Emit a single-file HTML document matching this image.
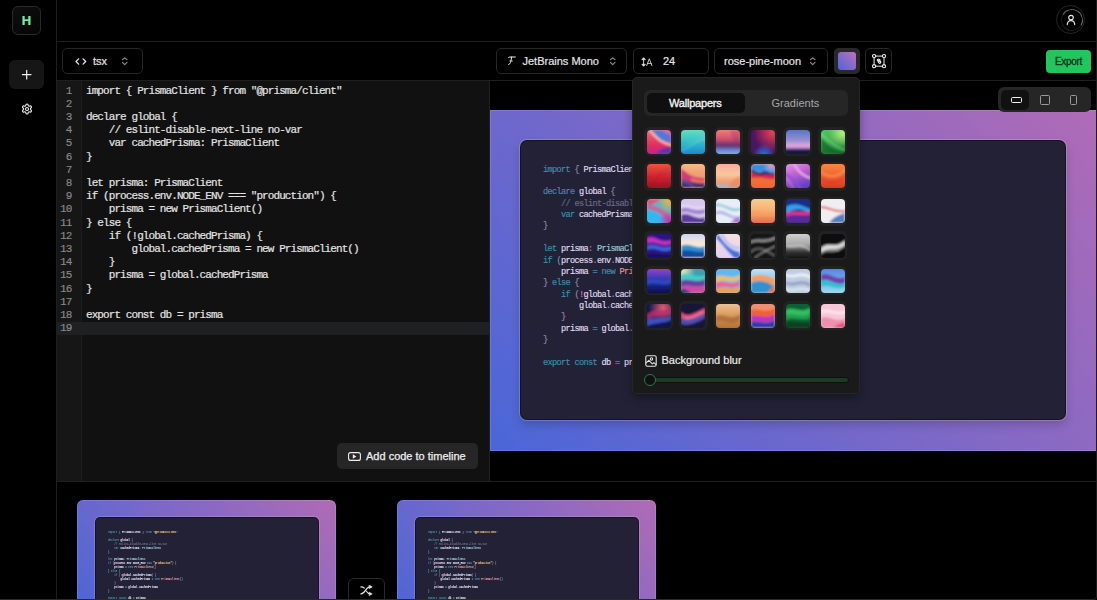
<!DOCTYPE html>
<html><head><meta charset="utf-8">
<style>
*{box-sizing:border-box;margin:0;padding:0}
html,body{width:1097px;height:600px;overflow:hidden;background:#000;font-family:"Liberation Sans",sans-serif;color:#e8e8e8}
.abs{position:absolute}
#side{position:absolute;left:0;top:0;width:57px;height:600px;border-right:1px solid #1f1f1f;background:#000}
#logo{left:12px;top:6px;width:29px;height:29px;border-radius:6px;border:1px solid #2a2a2a;background:linear-gradient(135deg,#0f0f0f,#050505);color:#7beaa5;font-weight:700;font-size:13px;-webkit-text-stroke:0.2px #7beaa5;text-align:center;line-height:27px}
#plus{left:9px;top:60px;width:35px;height:29px;border-radius:6px;background:#171616}
#hdr{position:absolute;left:57px;top:0;width:1040px;height:42px;border-bottom:1px solid #1f1f1f}
#tool{position:absolute;left:57px;top:42px;width:1040px;height:39px;border-bottom:1px solid #1f1f1f}
.sel{position:absolute;top:48px;height:26px;border:1px solid #262626;border-radius:5px;font-size:11px;color:#e6e6e6;line-height:24px;-webkit-text-stroke:0.2px #e6e6e6}
#editor{position:absolute;left:57px;top:81px;width:432px;height:400px;background:#111}
#gutter{position:absolute;left:0;top:0;width:25px;height:400px;background:#161616;border-right:1px solid #1c1c1c}
.code{position:absolute;font-family:"Liberation Mono",monospace;white-space:pre}
#ecode{left:29px;top:3.5px;font-size:11px;letter-spacing:-0.92px;-webkit-text-stroke:0.2px #e4e4e4;line-height:13.2px;color:#e4e4e4}
#lnum{left:0;top:3.5px;width:14.3px;-webkit-text-stroke:0.15px #8a8a8a;text-align:right;font-size:11px;letter-spacing:-0.97px;line-height:13.2px;color:#8a8a8a;font-family:"Liberation Mono",monospace;white-space:pre}
#active{left:0;top:241px;width:432px;height:13px;background:#1f2022}
#preview{position:absolute;left:489px;top:81px;width:608px;height:400px;border-left:1px solid #1f1f1f;background:#000}
#frame{left:0;top:29px;width:607px;height:341px;background:linear-gradient(47.5deg,#4a66d8,#b06bb6);box-shadow:inset 0 0 0 1px rgba(255,255,255,.12)}
#win{left:30px;top:30px;width:546px;height:280px;border-radius:7px;background:#232136;border:1px solid rgba(0,0,0,.45);box-shadow:0 0 0 1px rgba(255,255,255,.2),0 5px 10px rgba(0,0,0,.18)}
#pcode{left:22px;top:23.5px;font-size:8.6px;letter-spacing:-0.66px;line-height:11.37px;color:#e0def4;-webkit-text-stroke:0.15px currentColor}
.k{color:#3e8fb0}.p{color:#908caa}.t{color:#9ccfd8}.c{color:#6e6a86}.r{color:#ea9a97}.g{color:#f6c177}.l{color:#eb6f92}
#pop{left:632px;top:77px;width:227.5px;height:316.5px;background:#1a1a1a;border:1px solid #262626;border-radius:5px;box-shadow:0 4px 10px rgba(0,0,0,.35)}
#timeline{position:absolute;left:57px;top:481px;width:1040px;height:119px;border-top:1px solid #1f1f1f;background:#000}
.th{position:absolute;width:29px;height:29px;border-radius:6px;background:#222}
.th i{position:absolute;left:2.5px;top:2.5px;width:24px;height:24px;border-radius:4px}
</style></head><body>
<div id="side">
  <div id="logo" class="abs">H</div>
  <div id="plus" class="abs"><svg width="35" height="29" viewBox="0 0 35 29"><path d="M17.7 10.3v8.6M13.4 14.6h8.6" stroke="#f2f2f2" stroke-width="1.2" stroke-linecap="round"/></svg></div>
  <svg class="abs" style="left:21px;top:103px" width="12" height="12" viewBox="0 0 24 24" fill="none" stroke="#eee" stroke-width="2.2" stroke-linecap="round" stroke-linejoin="round"><path d="M12.22 2h-.44a2 2 0 0 0-2 2v.18a2 2 0 0 1-1 1.73l-.43.25a2 2 0 0 1-2 0l-.15-.08a2 2 0 0 0-2.73.73l-.22.38a2 2 0 0 0 .73 2.73l.15.1a2 2 0 0 1 1 1.72v.51a2 2 0 0 1-1 1.74l-.15.09a2 2 0 0 0-.73 2.73l.22.38a2 2 0 0 0 2.73.73l.15-.08a2 2 0 0 1 2 0l.43.25a2 2 0 0 1 1 1.73V20a2 2 0 0 0 2 2h.44a2 2 0 0 0 2-2v-.18a2 2 0 0 1 1-1.73l.43-.25a2 2 0 0 1 2 0l.15.08a2 2 0 0 0 2.73-.73l.22-.39a2 2 0 0 0-.73-2.73l-.15-.08a2 2 0 0 1-1-1.74v-.5a2 2 0 0 1 1-1.74l.15-.09a2 2 0 0 0 .73-2.73l-.22-.38a2 2 0 0 0-2.73-.73l-.15.08a2 2 0 0 1-2 0l-.43-.25a2 2 0 0 1-1-1.73V4a2 2 0 0 0-2-2z"/><circle cx="12" cy="12" r="3"/></svg>
</div>
<div id="hdr"></div>
<div class="abs" style="left:1056px;top:5px;width:29px;height:29px;border-radius:50%;border:1px solid #262626"></div>
<div class="abs" style="left:1060.5px;top:8.5px;width:22px;height:22px;border-radius:50%;border:1.2px solid #1c1c1c;border-right-color:#707070;border-top-color:#606060;transform:rotate(-15deg)"></div>
<svg class="abs" style="left:1064px;top:13px" width="14" height="14" viewBox="0 0 14 14" fill="none" stroke="#e6e6e6" stroke-width="1.2"><circle cx="7" cy="4.6" r="2.3"/><path d="M3.3 11.6c0-2.2 1.6-4 3.7-4s3.7 1.8 3.7 4" stroke-linecap="round"/></svg>
<div id="tool"></div>
<div class="sel" style="left:62px;width:81px"><svg class="abs" style="left:12px;top:9px" width="12" height="7" viewBox="0 0 12 7" fill="none" stroke="#eee" stroke-width="1.2" stroke-linecap="round" stroke-linejoin="round"><path d="M3.6 0.8L1 3.5 3.6 6.2M8.1 0.8L10.7 3.5 8.1 6.2"/></svg><span class="abs" style="left:30px;top:0">tsx</span><svg class="abs" style="left:59px;top:8px" width="6" height="9" viewBox="0 0 6 9" fill="none" stroke="#8f8f8f" stroke-width="1.1" stroke-linecap="round" stroke-linejoin="round"><path d="M0.4 2.6L2.7 1.0 5 2.6M0.4 5.4L2.7 7.6 5 5.4"/></svg></div>
<div class="sel" style="left:496px;width:131px"><svg class="abs" style="left:9px;top:7px" width="11" height="11" viewBox="0 0 11 11" fill="none" stroke="#eee" stroke-width="1" stroke-linecap="round"><path d="M2.3 1.7c.5-.6 1-.7 1.6-.7H9.3"/><path d="M5.6 1.2c-.3 2-.5 3.6-1.2 5.4-.4 1.1-.9 1.7-1.7 1.9"/><path d="M3.8 5h2.6" stroke-width="0.8"/></svg><span class="abs" style="left:25.5px;top:0">JetBrains Mono</span><svg class="abs" style="left:113px;top:8px" width="6" height="9" viewBox="0 0 6 9" fill="none" stroke="#8f8f8f" stroke-width="1.1" stroke-linecap="round" stroke-linejoin="round"><path d="M0.4 2.6L2.7 1.0 5 2.6M0.4 5.4L2.7 7.6 5 5.4"/></svg></div>
<div class="sel" style="left:633px;width:76px"><svg class="abs" style="left:7px;top:8px" width="13" height="10" viewBox="0 0 13 10" fill="none" stroke="#e0e0e0" stroke-width="0.9" stroke-linecap="round" stroke-linejoin="round"><path d="M2.6 1.5v7"/><path d="M1.1 2.4L2.6 0.7 4.1 2.4zM1.1 7.6L2.6 9.3 4.1 7.6z" fill="#e0e0e0"/><path d="M5.7 8.6L8.3 1.8 10.9 8.6M6.5 6.4h3.6"/></svg><span class="abs" style="left:29px;top:0">24</span></div>
<div class="sel" style="left:714px;width:114px"><span class="abs" style="left:9px;top:0">rose-pine-moon</span><svg class="abs" style="left:95px;top:8px" width="6" height="9" viewBox="0 0 6 9" fill="none" stroke="#8f8f8f" stroke-width="1.1" stroke-linecap="round" stroke-linejoin="round"><path d="M0.4 2.6L2.7 1.0 5 2.6M0.4 5.4L2.7 7.6 5 5.4"/></svg></div>
<div class="abs" style="left:834px;top:48px;width:26px;height:26px;border-radius:5px;background:#2a2828"><div class="abs" style="left:4px;top:4px;width:18px;height:18px;border-radius:3px;background:linear-gradient(to top right,#4d63dc,#8a6cc8 55%,#c071bd)"></div></div>
<div class="sel" style="left:865px;width:27px"><svg class="abs" style="left:0;top:0" width="27" height="26" viewBox="0 0 27 26" fill="none" stroke="#eee" stroke-width="1"><path d="M9.6 7.1H16.5M18 8.6V15.7M16.5 17.2H9.6M8.1 15.7V8.6"/><circle cx="8.1" cy="7.1" r="1.6" fill="#000" stroke-width="1.1"/><circle cx="18" cy="7.1" r="1.6" fill="#000" stroke-width="1.1"/><circle cx="8.1" cy="17.2" r="1.6" fill="#000" stroke-width="1.1"/><circle cx="18" cy="17.2" r="1.6" fill="#000" stroke-width="1.1"/><path d="M12.4 12.6l-.7-.7a1.1 1.1 0 0 1 1.6-1.6l.7.7M13.8 11.6l.7.7a1.1 1.1 0 0 1-1.6 1.6l-.7-.7M12.6 11.4l1.3 1.3" stroke-width="1.1" stroke-linecap="round"/></svg></div>
<div class="abs" style="left:1046px;top:50px;width:45px;height:23px;border-radius:4px;background:#22c55e;color:#0b2914;font-size:10px;text-align:center;line-height:23px;letter-spacing:-0.3px;-webkit-text-stroke:0.3px #0b2914">Export</div>
<div id="editor">
  <div id="gutter"></div>
  <div id="active" class="abs"></div>
  <div id="lnum" class="abs">1
2
3
4
5
6
7
8
9
10
11
12
13
14
15
16
17
18
19</div>
  <div id="ecode" class="code">import { PrismaClient } from "@prisma/client"

declare global {
    // eslint-disable-next-line no-var
    var cachedPrisma: PrismaClient
}

let prisma: PrismaClient
if (process.env.NODE_ENV === "production") {
    prisma = new PrismaClient()
} else {
    if (!global.cachedPrisma) {
        global.cachedPrisma = new PrismaClient()
    }
    prisma = global.cachedPrisma
}

export const db = prisma
</div>
  <div class="abs" style="left:280px;top:362px;width:141px;height:26px;border-radius:5px;background:#262626;color:#f0f0f0;font-size:11px;line-height:26px"><svg class="abs" style="left:10.5px;top:8.5px" width="13" height="9" viewBox="0 0 13 9" fill="none" stroke="#eee" stroke-width="1.1"><rect x="0.6" y="0.6" width="11.8" height="7.8" rx="2"/><path d="M4.8 2.3v4.4l3.6-2.2z" fill="#eee" stroke="none"/></svg><span class="abs" style="left:29px;top:0;-webkit-text-stroke:0.25px #f0f0f0">Add code to timeline</span></div>
</div>
<div id="preview">
  <div id="frame" class="abs">
    <div id="win" class="abs">
      <div id="pcode" class="code"><span class="k">import</span> <span class="p">{</span> PrismaClient <span class="p">}</span> <span class="k">from</span> <span class="g">"@prisma/client"</span>

<span class="k">declare</span> global <span class="p">{</span>
    <span class="c">// eslint-disable-next-line no-var</span>
    <span class="k">var</span> cachedPrisma<span class="p">:</span> <span class="t">PrismaClient</span>
<span class="p">}</span>

<span class="k">let</span> prisma<span class="p">:</span> <span class="t">PrismaClient</span>
<span class="k">if</span> <span class="p">(</span>process<span class="p">.</span>env<span class="p">.</span>NODE_ENV <span class="k">===</span> <span class="g">"production"</span><span class="p">)</span> <span class="p">{</span>
    prisma <span class="k">=</span> <span class="k">new</span> <span class="r">PrismaClient</span><span class="p">()</span>
<span class="p">}</span> <span class="k">else</span> <span class="p">{</span>
    <span class="k">if</span> <span class="p">(</span><span class="l">!</span>global<span class="p">.</span>cachedPrisma<span class="p">)</span> <span class="p">{</span>
        global<span class="p">.</span>cachedPrisma <span class="k">=</span> <span class="k">new</span> <span class="r">PrismaClient</span><span class="p">()</span>
    <span class="p">}</span>
    prisma <span class="k">=</span> global<span class="p">.</span>cachedPrisma
<span class="p">}</span>

<span class="k">export</span> <span class="k">const</span> db <span class="k">=</span> prisma</div>
    </div>
  </div>
</div>
<div class="abs" style="left:998px;top:87px;width:93px;height:25px;border-radius:6px;background:#262626">
  <div class="abs" style="left:3px;top:3px;width:28px;height:19.5px;border-radius:5px;background:#111"></div>
  <div class="abs" style="left:12.5px;top:9.5px;width:11px;height:6.5px;border:1.3px solid #f2f2f2;border-radius:1.5px"></div>
  <div class="abs" style="left:42px;top:7.8px;width:10px;height:10px;border:1.3px solid #9a9a9a;border-radius:1.5px"></div>
  <div class="abs" style="left:72px;top:7.5px;width:7px;height:10.5px;border:1.3px solid #9a9a9a;border-radius:1.5px"></div>
</div>
<div id="timeline"><div class="abs" style="left:20px;top:18px;width:259px;height:110px;border-radius:6px;background:linear-gradient(47.5deg,#4a66d8,#b06bb6);box-shadow:inset 0 0 0 1px rgba(255,255,255,.12)"><div class="abs" style="left:17.5px;top:17px;width:224px;height:100px;border-radius:5px;background:#232136;overflow:hidden;border:1px solid rgba(0,0,0,.4);box-shadow:0 0 0 1px rgba(255,255,255,.15)"><div class="code abs" style="left:12.3px;top:13.3px;font-size:7.8px;line-height:11.64px;color:#e0def4;transform:scale(0.3333);transform-origin:0 0;-webkit-text-stroke:0.35px currentColor"><span class="k">import</span> <span class="p">{</span> PrismaClient <span class="p">}</span> <span class="k">from</span> <span class="g">"@prisma/client"</span>

<span class="k">declare</span> global <span class="p">{</span>
    <span class="c">// eslint-disable-next-line no-var</span>
    <span class="k">var</span> cachedPrisma<span class="p">:</span> <span class="t">PrismaClient</span>
<span class="p">}</span>

<span class="k">let</span> prisma<span class="p">:</span> <span class="t">PrismaClient</span>
<span class="k">if</span> <span class="p">(</span>process<span class="p">.</span>env<span class="p">.</span>NODE_ENV <span class="k">===</span> <span class="g">"production"</span><span class="p">)</span> <span class="p">{</span>
    prisma <span class="k">=</span> <span class="k">new</span> <span class="r">PrismaClient</span><span class="p">()</span>
<span class="p">}</span> <span class="k">else</span> <span class="p">{</span>
    <span class="k">if</span> <span class="p">(</span><span class="l">!</span>global<span class="p">.</span>cachedPrisma<span class="p">)</span> <span class="p">{</span>
        global<span class="p">.</span>cachedPrisma <span class="k">=</span> <span class="k">new</span> <span class="r">PrismaClient</span><span class="p">()</span>
    <span class="p">}</span>
    prisma <span class="k">=</span> global<span class="p">.</span>cachedPrisma
<span class="p">}</span>

<span class="k">export</span> <span class="k">const</span> db <span class="k">=</span> prisma</div></div></div><div class="abs" style="left:340px;top:18px;width:259px;height:110px;border-radius:6px;background:linear-gradient(47.5deg,#4a66d8,#b06bb6);box-shadow:inset 0 0 0 1px rgba(255,255,255,.12)"><div class="abs" style="left:17.5px;top:17px;width:224px;height:100px;border-radius:5px;background:#232136;overflow:hidden;border:1px solid rgba(0,0,0,.4);box-shadow:0 0 0 1px rgba(255,255,255,.15)"><div class="code abs" style="left:12.3px;top:13.3px;font-size:7.8px;line-height:11.64px;color:#e0def4;transform:scale(0.3333);transform-origin:0 0;-webkit-text-stroke:0.35px currentColor"><span class="k">import</span> <span class="p">{</span> PrismaClient <span class="p">}</span> <span class="k">from</span> <span class="g">"@prisma/client"</span>

<span class="k">declare</span> global <span class="p">{</span>
    <span class="c">// eslint-disable-next-line no-var</span>
    <span class="k">var</span> cachedPrisma<span class="p">:</span> <span class="t">PrismaClient</span>
<span class="p">}</span>

<span class="k">let</span> prisma<span class="p">:</span> <span class="t">PrismaClient</span>
<span class="k">if</span> <span class="p">(</span>process<span class="p">.</span>env<span class="p">.</span>NODE_ENV <span class="k">===</span> <span class="g">"production"</span><span class="p">)</span> <span class="p">{</span>
    prisma <span class="k">=</span> <span class="k">new</span> <span class="r">PrismaClient</span><span class="p">()</span>
<span class="p">}</span> <span class="k">else</span> <span class="p">{</span>
    <span class="k">if</span> <span class="p">(</span><span class="l">!</span>global<span class="p">.</span>cachedPrisma<span class="p">)</span> <span class="p">{</span>
        global<span class="p">.</span>cachedPrisma <span class="k">=</span> <span class="k">new</span> <span class="r">PrismaClient</span><span class="p">()</span>
    <span class="p">}</span>
    prisma <span class="k">=</span> global<span class="p">.</span>cachedPrisma
<span class="p">}</span>

<span class="k">export</span> <span class="k">const</span> db <span class="k">=</span> prisma</div></div></div><div class="abs" style="left:291px;top:96px;width:36.5px;height:30px;border-radius:6px;background:#000;border:1px solid #2a2a2a"><svg class="abs" style="left:11px;top:5.5px" width="13" height="11" viewBox="0 0 13 11" fill="none" stroke="#e8e8e8" stroke-width="1.1" stroke-linecap="round"><path d="M0.9 1.9c1.6 0 2.6.5 3.4 1.3"/><path d="M6.4 6.2c.9 1.4 2 2.6 3.6 2.6"/><path d="M0.9 8.9c4.5 0 4.6-7 9.1-7"/><path d="M9.4 0.3L12.2 1.9 9.4 3.5z M9.4 7.3L12.2 8.9 9.4 10.5z" fill="#e8e8e8" stroke-width="0.6" stroke-linejoin="round"/></svg></div></div>
<div class="abs" style="left:0;top:0;width:1097px;height:600px;border-right:1px solid #1c1c1c;border-bottom:1px solid #2a2a2a;border-bottom-right-radius:4px;pointer-events:none"></div>
<div id="pop" class="abs">
  <div class="abs" style="left:11px;top:11.5px;width:204px;height:26px;border-radius:6px;background:#262626">
    <div class="abs" style="left:3px;top:3px;width:98px;height:20px;border-radius:5px;background:#0f0f0f"></div>
    <span class="abs" style="left:25px;top:0;line-height:26px;font-size:11px;color:#f4f4f4;letter-spacing:-0.2px;-webkit-text-stroke:0.35px #f4f4f4">Wallpapers</span>
    <span class="abs" style="left:127.5px;top:0;line-height:26px;font-size:11px;color:#a8a8a8">Gradients</span>
  </div>
  <div class="th" style="left:11.0px;top:49.0px"><svg class="abs" style="left:2.5px;top:2.5px" width="24" height="24" viewBox="0 0 24 24"><defs><linearGradient id="t0a" x1="0" y1="0" x2="0" y2="1"><stop offset="0" stop-color="#f07080"/><stop offset="0.6" stop-color="#e03060"/><stop offset="1" stop-color="#c02090"/></linearGradient><clipPath id="c0"><rect width="24" height="24" rx="4"/></clipPath><filter id="f0" x="-10%" y="-10%" width="120%" height="120%"><feGaussianBlur stdDeviation="0.8"/></filter></defs><g clip-path="url(#c0)"><g filter="url(#f0)"><rect x="-2" y="-2" width="28" height="28" fill="url(#t0a)"/><path d="M5 0 C9 5 12 11 24 13 V0 Z" fill="#4f78dc" opacity="1"/><path d="M15 0 H24 V5 C20 4 17 2 15 0Z" fill="#e060b0" opacity="1"/><path d="M3 1 C8 5 11 12 24 15" fill="none" stroke="#f8c0a8" stroke-width="2.2" opacity="1" stroke-linecap="round"/><path d="M9 24 C13 19 18 17 24 17 V24 Z" fill="#6030b0" opacity="1"/></g></g></svg></div><div class="th" style="left:45.8px;top:49.0px"><svg class="abs" style="left:2.5px;top:2.5px" width="24" height="24" viewBox="0 0 24 24"><defs><linearGradient id="t1a" x1="0" y1="0" x2="0" y2="1"><stop offset="0" stop-color="#70e0c0"/><stop offset="0.5" stop-color="#30c0c8"/><stop offset="1" stop-color="#1880d0"/></linearGradient><clipPath id="c1"><rect width="24" height="24" rx="4"/></clipPath><filter id="f1" x="-10%" y="-10%" width="120%" height="120%"><feGaussianBlur stdDeviation="0.8"/></filter></defs><g clip-path="url(#c1)"><g filter="url(#f1)"><rect x="-2" y="-2" width="28" height="28" fill="url(#t1a)"/><path d="M0 21 C8 18 14 11 24 9" fill="none" stroke="#fff" stroke-width="0.8" opacity="0.35" stroke-linecap="round"/><path d="M0 17 C8 14 14 8 24 6" fill="none" stroke="#fff" stroke-width="0.6" opacity="0.2" stroke-linecap="round"/></g></g></svg></div><div class="th" style="left:80.6px;top:49.0px"><svg class="abs" style="left:2.5px;top:2.5px" width="24" height="24" viewBox="0 0 24 24"><defs><linearGradient id="t2a" x1="0" y1="0" x2="0" y2="1"><stop offset="0" stop-color="#f08a78"/><stop offset="0.4" stop-color="#d05070"/><stop offset="0.62" stop-color="#603070"/><stop offset="0.85" stop-color="#70a0e8"/><stop offset="1" stop-color="#a0a0f0"/></linearGradient><linearGradient id="t2b" x1="0" y1="0" x2="1" y2="0"><stop offset="0" stop-color="#a02864"/><stop offset="1" stop-color="#a02864"/></linearGradient><clipPath id="c2"><rect width="24" height="24" rx="4"/></clipPath><filter id="f2" x="-10%" y="-10%" width="120%" height="120%"><feGaussianBlur stdDeviation="0.8"/></filter></defs><g clip-path="url(#c2)"><g filter="url(#f2)"><rect x="-2" y="-2" width="28" height="28" fill="url(#t2a)"/><path d="M14 0 H24 V20 C20 16 16 10 14 0Z" fill="#a02864" opacity="0.3"/></g></g></svg></div><div class="th" style="left:115.4px;top:49.0px"><svg class="abs" style="left:2.5px;top:2.5px" width="24" height="24" viewBox="0 0 24 24"><defs><radialGradient id="t3a" cx="22" cy="2" r="20" gradientUnits="userSpaceOnUse"><stop offset="0" stop-color="#f04050"/><stop offset="1" stop-color="#f04050" stop-opacity="0"/></radialGradient><radialGradient id="t3b" cx="13" cy="25" r="11" gradientUnits="userSpaceOnUse"><stop offset="0" stop-color="#2878f0"/><stop offset="1" stop-color="#2878f0" stop-opacity="0"/></radialGradient><clipPath id="c3"><rect width="24" height="24" rx="4"/></clipPath><filter id="f3" x="-10%" y="-10%" width="120%" height="120%"><feGaussianBlur stdDeviation="0.8"/></filter></defs><g clip-path="url(#c3)"><g filter="url(#f3)"><rect x="-2" y="-2" width="28" height="28" fill="#4a1462"/><rect x="-2" y="-2" width="28" height="28" fill="url(#t3a)"/><rect x="-2" y="-2" width="28" height="28" fill="url(#t3b)"/></g></g></svg></div><div class="th" style="left:150.2px;top:49.0px"><svg class="abs" style="left:2.5px;top:2.5px" width="24" height="24" viewBox="0 0 24 24"><defs><linearGradient id="t4a" x1="0" y1="0" x2="0" y2="1"><stop offset="0" stop-color="#4a70c8"/><stop offset="0.45" stop-color="#9a90d0"/><stop offset="0.65" stop-color="#e8a8e0"/><stop offset="0.72" stop-color="#b080c0"/><stop offset="0.78" stop-color="#202050"/><stop offset="1" stop-color="#0a0a30"/></linearGradient><clipPath id="c4"><rect width="24" height="24" rx="4"/></clipPath><filter id="f4" x="-10%" y="-10%" width="120%" height="120%"><feGaussianBlur stdDeviation="0.8"/></filter></defs><g clip-path="url(#c4)"><g filter="url(#f4)"><rect x="-2" y="-2" width="28" height="28" fill="url(#t4a)"/></g></g></svg></div><div class="th" style="left:185.0px;top:49.0px"><svg class="abs" style="left:2.5px;top:2.5px" width="24" height="24" viewBox="0 0 24 24"><defs><linearGradient id="t5a" x1="0" y1="0" x2="1" y2="1"><stop offset="0" stop-color="#50d070"/><stop offset="0.4" stop-color="#40b050"/><stop offset="1" stop-color="#0e6a28"/></linearGradient><radialGradient id="t5b" cx="22" cy="3" r="15" gradientUnits="userSpaceOnUse"><stop offset="0" stop-color="#b8f488"/><stop offset="1" stop-color="#b8f488" stop-opacity="0"/></radialGradient><clipPath id="c5"><rect width="24" height="24" rx="4"/></clipPath><filter id="f5" x="-10%" y="-10%" width="120%" height="120%"><feGaussianBlur stdDeviation="0.8"/></filter></defs><g clip-path="url(#c5)"><g filter="url(#f5)"><rect x="-2" y="-2" width="28" height="28" fill="url(#t5a)"/><rect x="-2" y="-2" width="28" height="28" fill="url(#t5b)"/><path d="M0 8 C6 14 14 22 24 22 V24 H0Z" fill="#0a5020" opacity="0.6"/><path d="M0 4 C8 10 14 18 24 20" fill="none" stroke="#80e890" stroke-width="1.2" opacity="0.8" stroke-linecap="round"/></g></g></svg></div><div class="th" style="left:11.0px;top:83.8px"><svg class="abs" style="left:2.5px;top:2.5px" width="24" height="24" viewBox="0 0 24 24"><defs><linearGradient id="t6a" x1="0" y1="0" x2="0" y2="1"><stop offset="0" stop-color="#f05a40"/><stop offset="0.55" stop-color="#d02030"/><stop offset="1" stop-color="#901020"/></linearGradient><clipPath id="c6"><rect width="24" height="24" rx="4"/></clipPath><filter id="f6" x="-10%" y="-10%" width="120%" height="120%"><feGaussianBlur stdDeviation="0.8"/></filter></defs><g clip-path="url(#c6)"><g filter="url(#f6)"><rect x="-2" y="-2" width="28" height="28" fill="url(#t6a)"/><path d="M4 24 C8 14 14 8 22 4" fill="none" stroke="#000" stroke-width="1" opacity="0.12" stroke-linecap="round"/><path d="M0 14 C8 10 16 12 24 8" fill="none" stroke="#000" stroke-width="1" opacity="0.1" stroke-linecap="round"/></g></g></svg></div><div class="th" style="left:45.8px;top:83.8px"><svg class="abs" style="left:2.5px;top:2.5px" width="24" height="24" viewBox="0 0 24 24"><defs><linearGradient id="t7a" x1="0" y1="0" x2="0" y2="1"><stop offset="0" stop-color="#f8c090"/><stop offset="0.4" stop-color="#f0a070"/><stop offset="1" stop-color="#f0a070"/></linearGradient><clipPath id="c7"><rect width="24" height="24" rx="4"/></clipPath><filter id="f7" x="-10%" y="-10%" width="120%" height="120%"><feGaussianBlur stdDeviation="0.8"/></filter></defs><g clip-path="url(#c7)"><g filter="url(#f7)"><rect x="-2" y="-2" width="28" height="28" fill="url(#t7a)"/><path d="M0 4 C6 10 12 14 24 14 V19 C14 20 8 17 0 15 Z" fill="#d03a7a" opacity="1"/><path d="M10 14 C16 15 20 17 24 16 V20 C20 20 14 19 10 18Z" fill="#f07050" opacity="1"/><path d="M0 15 C8 17 14 20 24 19 V24 H0Z" fill="#40307a" opacity="1"/><path d="M0 17 C6 18 10 20 14 24" fill="none" stroke="#90a0f0" stroke-width="1" opacity="0.6" stroke-linecap="round"/></g></g></svg></div><div class="th" style="left:80.6px;top:83.8px"><svg class="abs" style="left:2.5px;top:2.5px" width="24" height="24" viewBox="0 0 24 24"><defs><linearGradient id="t8a" x1="0" y1="0" x2="0" y2="1"><stop offset="0" stop-color="#f8a898"/><stop offset="0.45" stop-color="#f8c8a0"/><stop offset="0.7" stop-color="#f0a070"/><stop offset="1" stop-color="#90b8e8"/></linearGradient><clipPath id="c8"><rect width="24" height="24" rx="4"/></clipPath><filter id="f8" x="-10%" y="-10%" width="120%" height="120%"><feGaussianBlur stdDeviation="0.8"/></filter></defs><g clip-path="url(#c8)"><g filter="url(#f8)"><rect x="-2" y="-2" width="28" height="28" fill="url(#t8a)"/><path d="M12 24 C14 18 18 14 24 12 V24Z" fill="#f08050" opacity="0.55"/></g></g></svg></div><div class="th" style="left:115.4px;top:83.8px"><svg class="abs" style="left:2.5px;top:2.5px" width="24" height="24" viewBox="0 0 24 24"><defs><linearGradient id="t9a" x1="0" y1="0" x2="0" y2="1"><stop offset="0" stop-color="#f09040"/><stop offset="1" stop-color="#f06030"/></linearGradient><radialGradient id="t9b" cx="20" cy="2" r="8" gradientUnits="userSpaceOnUse"><stop offset="0" stop-color="#e0a0c0"/><stop offset="1" stop-color="#e0a0c0" stop-opacity="0"/></radialGradient><clipPath id="c9"><rect width="24" height="24" rx="4"/></clipPath><filter id="f9" x="-10%" y="-10%" width="120%" height="120%"><feGaussianBlur stdDeviation="0.8"/></filter></defs><g clip-path="url(#c9)"><g filter="url(#f9)"><rect x="-2" y="-2" width="28" height="28" fill="url(#t9a)"/><path d="M0 0 H24 V9 C18 11 12 7 6 8 C4 8 2 6 0 5Z" fill="#3090e0" opacity="1"/><rect x="-2" y="-2" width="28" height="28" fill="url(#t9b)"/><path d="M0 5 C4 8 8 10 12 8 C16 6 20 11 24 9 V11 C20 13 16 9 12 11 C8 13 4 10 0 8Z" fill="#202070" opacity="1"/><path d="M0 8 C4 11 8 13 12 11 C16 9 20 13 24 11 V15 C18 16 10 12 0 14Z" fill="#e02050" opacity="1"/></g></g></svg></div><div class="th" style="left:150.2px;top:83.8px"><svg class="abs" style="left:2.5px;top:2.5px" width="24" height="24" viewBox="0 0 24 24"><defs><linearGradient id="t10a" x1="0" y1="0" x2="0.4" y2="1"><stop offset="0" stop-color="#e8a0f0"/><stop offset="0.5" stop-color="#c060d0"/><stop offset="1" stop-color="#6040c0"/></linearGradient><clipPath id="c10"><rect width="24" height="24" rx="4"/></clipPath><filter id="f10" x="-10%" y="-10%" width="120%" height="120%"><feGaussianBlur stdDeviation="0.8"/></filter></defs><g clip-path="url(#c10)"><g filter="url(#f10)"><rect x="-2" y="-2" width="28" height="28" fill="url(#t10a)"/><path d="M8 0 C12 8 18 12 24 14" fill="none" stroke="#f0b0e8" stroke-width="2" opacity="1" stroke-linecap="round"/><path d="M0 10 C6 14 12 20 14 24" fill="none" stroke="#9050e0" stroke-width="2" opacity="1" stroke-linecap="round"/><path d="M0 14 C4 18 6 22 8 24" fill="none" stroke="#fff" stroke-width="0.8" opacity="0.5" stroke-linecap="round"/></g></g></svg></div><div class="th" style="left:185.0px;top:83.8px"><svg class="abs" style="left:2.5px;top:2.5px" width="24" height="24" viewBox="0 0 24 24"><defs><linearGradient id="t11a" x1="0" y1="0" x2="0" y2="1"><stop offset="0" stop-color="#f89040"/><stop offset="0.5" stop-color="#f06030"/><stop offset="1" stop-color="#d83020"/></linearGradient><clipPath id="c11"><rect width="24" height="24" rx="4"/></clipPath><filter id="f11" x="-10%" y="-10%" width="120%" height="120%"><feGaussianBlur stdDeviation="0.8"/></filter></defs><g clip-path="url(#c11)"><g filter="url(#f11)"><rect x="-2" y="-2" width="28" height="28" fill="url(#t11a)"/><path d="M0 8 C8 14 16 14 24 6" fill="none" stroke="#f8a050" stroke-width="2" opacity="0.7" stroke-linecap="round"/><path d="M0 14 C8 20 16 20 24 12" fill="none" stroke="#c02020" stroke-width="1.5" opacity="0.4" stroke-linecap="round"/></g></g></svg></div><div class="th" style="left:11.0px;top:118.6px"><svg class="abs" style="left:2.5px;top:2.5px" width="24" height="24" viewBox="0 0 24 24"><defs><radialGradient id="t12a" cx="22" cy="2" r="14" gradientUnits="userSpaceOnUse"><stop offset="0" stop-color="#f8b030"/><stop offset="1" stop-color="#f8b030" stop-opacity="0"/></radialGradient><radialGradient id="t12b" cx="22" cy="22" r="10" gradientUnits="userSpaceOnUse"><stop offset="0" stop-color="#c030b0"/><stop offset="1" stop-color="#c030b0" stop-opacity="0"/></radialGradient><clipPath id="c12"><rect width="24" height="24" rx="4"/></clipPath><filter id="f12" x="-10%" y="-10%" width="120%" height="120%"><feGaussianBlur stdDeviation="0.8"/></filter></defs><g clip-path="url(#c12)"><g filter="url(#f12)"><rect x="-2" y="-2" width="28" height="28" fill="#30b8f0"/><rect x="-2" y="-2" width="28" height="28" fill="url(#t12a)"/><path d="M0 0 H14 C10 4 6 6 0 6Z" fill="#f05060" opacity="0.9"/><path d="M0 6 C8 6 14 8 24 16 V24 H20 C14 14 8 11 0 11Z" fill="#e85a80" opacity="0.75"/><rect x="-2" y="-2" width="28" height="28" fill="url(#t12b)"/></g></g></svg></div><div class="th" style="left:45.8px;top:118.6px"><svg class="abs" style="left:2.5px;top:2.5px" width="24" height="24" viewBox="0 0 24 24"><defs><clipPath id="c13"><rect width="24" height="24" rx="4"/></clipPath><filter id="f13" x="-10%" y="-10%" width="120%" height="120%"><feGaussianBlur stdDeviation="0.8"/></filter></defs><g clip-path="url(#c13)"><g filter="url(#f13)"><rect x="-2" y="-2" width="28" height="28" fill="#d8c8f0"/><path d="M0 10 C6 6 12 14 24 10 V14 C14 18 6 10 0 14Z" fill="#a080d0" opacity="1"/><path d="M0 16 C8 12 14 22 24 18 V24 H0Z" fill="#5a3a9a" opacity="1"/><path d="M0 8 C6 4 12 12 24 8" fill="none" stroke="#fff" stroke-width="1" opacity="0.7" stroke-linecap="round"/></g></g></svg></div><div class="th" style="left:80.6px;top:118.6px"><svg class="abs" style="left:2.5px;top:2.5px" width="24" height="24" viewBox="0 0 24 24"><defs><clipPath id="c14"><rect width="24" height="24" rx="4"/></clipPath><filter id="f14" x="-10%" y="-10%" width="120%" height="120%"><feGaussianBlur stdDeviation="0.8"/></filter></defs><g clip-path="url(#c14)"><g filter="url(#f14)"><rect x="-2" y="-2" width="28" height="28" fill="#e8eef8"/><path d="M0 6 C8 4 14 14 24 10" fill="none" stroke="#70c0d0" stroke-width="2.5" opacity="0.7" stroke-linecap="round"/><path d="M0 14 C8 10 16 22 24 18" fill="none" stroke="#a0a0e0" stroke-width="3" opacity="0.7" stroke-linecap="round"/><path d="M14 24 C18 20 22 18 24 18 V24Z" fill="#b070d8" opacity="1"/></g></g></svg></div><div class="th" style="left:115.4px;top:118.6px"><svg class="abs" style="left:2.5px;top:2.5px" width="24" height="24" viewBox="0 0 24 24"><defs><linearGradient id="t15a" x1="0" y1="0" x2="0" y2="1"><stop offset="0" stop-color="#f8d090"/><stop offset="0.5" stop-color="#f8b070"/><stop offset="1" stop-color="#e86040"/></linearGradient><clipPath id="c15"><rect width="24" height="24" rx="4"/></clipPath><filter id="f15" x="-10%" y="-10%" width="120%" height="120%"><feGaussianBlur stdDeviation="0.8"/></filter></defs><g clip-path="url(#c15)"><g filter="url(#f15)"><rect x="-2" y="-2" width="28" height="28" fill="url(#t15a)"/><path d="M0 12 C8 10 16 16 24 12 V16 C16 20 8 14 0 17Z" fill="#f8a060" opacity="1"/></g></g></svg></div><div class="th" style="left:150.2px;top:118.6px"><svg class="abs" style="left:2.5px;top:2.5px" width="24" height="24" viewBox="0 0 24 24"><defs><clipPath id="c16"><rect width="24" height="24" rx="4"/></clipPath><filter id="f16" x="-10%" y="-10%" width="120%" height="120%"><feGaussianBlur stdDeviation="0.8"/></filter></defs><g clip-path="url(#c16)"><g filter="url(#f16)"><rect x="-2" y="-2" width="28" height="28" fill="#1a2a8a"/><path d="M0 8 C6 4 12 4 24 10 V14 C14 8 8 10 0 14Z" fill="#30a0e8" opacity="1"/><path d="M0 14 C8 10 14 14 24 12 V16 C14 18 8 14 0 18Z" fill="#e03090" opacity="1"/><path d="M0 18 C8 14 14 20 24 16 V24 H0Z" fill="#5a2a9a" opacity="1"/></g></g></svg></div><div class="th" style="left:185.0px;top:118.6px"><svg class="abs" style="left:2.5px;top:2.5px" width="24" height="24" viewBox="0 0 24 24"><defs><clipPath id="c17"><rect width="24" height="24" rx="4"/></clipPath><filter id="f17" x="-10%" y="-10%" width="120%" height="120%"><feGaussianBlur stdDeviation="0.8"/></filter></defs><g clip-path="url(#c17)"><g filter="url(#f17)"><rect x="-2" y="-2" width="28" height="28" fill="#f0eef0"/><path d="M0 8 C8 8 14 14 24 12" fill="none" stroke="#e04050" stroke-width="2" opacity="0.8" stroke-linecap="round"/><path d="M8 24 C12 18 18 16 24 14 V24Z" fill="#3060b0" opacity="0.8"/></g></g></svg></div><div class="th" style="left:11.0px;top:153.4px"><svg class="abs" style="left:2.5px;top:2.5px" width="24" height="24" viewBox="0 0 24 24"><defs><clipPath id="c18"><rect width="24" height="24" rx="4"/></clipPath><filter id="f18" x="-10%" y="-10%" width="120%" height="120%"><feGaussianBlur stdDeviation="0.8"/></filter></defs><g clip-path="url(#c18)"><g filter="url(#f18)"><rect x="-2" y="-2" width="28" height="28" fill="#2a1880"/><path d="M0 4 C8 0 12 10 24 6 V10 C14 14 8 6 0 10Z" fill="#c030c0" opacity="1"/><path d="M0 12 C8 8 14 16 24 12 V16 C14 20 8 12 0 16Z" fill="#4060e0" opacity="1"/><path d="M0 20 C8 18 16 22 24 20 V24 H0Z" fill="#1a1060" opacity="1"/></g></g></svg></div><div class="th" style="left:45.8px;top:153.4px"><svg class="abs" style="left:2.5px;top:2.5px" width="24" height="24" viewBox="0 0 24 24"><defs><linearGradient id="t19a" x1="0" y1="0" x2="0" y2="1"><stop offset="0" stop-color="#c0d0f8"/><stop offset="0.4" stop-color="#f8e8d8"/><stop offset="1" stop-color="#f8e8d8"/></linearGradient><clipPath id="c19"><rect width="24" height="24" rx="4"/></clipPath><filter id="f19" x="-10%" y="-10%" width="120%" height="120%"><feGaussianBlur stdDeviation="0.8"/></filter></defs><g clip-path="url(#c19)"><g filter="url(#f19)"><rect x="-2" y="-2" width="28" height="28" fill="url(#t19a)"/><path d="M0 12 C8 8 16 16 24 12 V24 H0Z" fill="#3090d0" opacity="1"/><path d="M0 17 C8 14 16 20 24 17 V24 H0Z" fill="#1050a0" opacity="1"/></g></g></svg></div><div class="th" style="left:80.6px;top:153.4px"><svg class="abs" style="left:2.5px;top:2.5px" width="24" height="24" viewBox="0 0 24 24"><defs><linearGradient id="t20a" x1="0" y1="0" x2="0" y2="1"><stop offset="0" stop-color="#f8e0e0"/><stop offset="1" stop-color="#e0d0f0"/></linearGradient><clipPath id="c20"><rect width="24" height="24" rx="4"/></clipPath><filter id="f20" x="-10%" y="-10%" width="120%" height="120%"><feGaussianBlur stdDeviation="0.8"/></filter></defs><g clip-path="url(#c20)"><g filter="url(#f20)"><rect x="-2" y="-2" width="28" height="28" fill="url(#t20a)"/><path d="M2 0 C8 8 12 16 24 18 V24 H18 C12 18 6 10 0 4Z" fill="#4070e0" opacity="1"/><path d="M6 0 C10 8 14 14 24 14" fill="none" stroke="#a0c0f8" stroke-width="2" opacity="1" stroke-linecap="round"/></g></g></svg></div><div class="th" style="left:115.4px;top:153.4px"><svg class="abs" style="left:2.5px;top:2.5px" width="24" height="24" viewBox="0 0 24 24"><defs><clipPath id="c21"><rect width="24" height="24" rx="4"/></clipPath><filter id="f21" x="-10%" y="-10%" width="120%" height="120%"><feGaussianBlur stdDeviation="0.8"/></filter></defs><g clip-path="url(#c21)"><g filter="url(#f21)"><rect x="-2" y="-2" width="28" height="28" fill="#141414"/><path d="M0 8 C8 4 14 10 24 4" fill="none" stroke="#909090" stroke-width="2.5" opacity="1" stroke-linecap="round"/><path d="M0 18 C6 12 12 14 24 22" fill="none" stroke="#606060" stroke-width="2" opacity="1" stroke-linecap="round"/><path d="M4 24 C10 18 18 16 24 12" fill="none" stroke="#bbbbbb" stroke-width="1" opacity="1" stroke-linecap="round"/></g></g></svg></div><div class="th" style="left:150.2px;top:153.4px"><svg class="abs" style="left:2.5px;top:2.5px" width="24" height="24" viewBox="0 0 24 24"><defs><linearGradient id="t22a" x1="0" y1="0" x2="0" y2="1"><stop offset="0" stop-color="#d8d8d8"/><stop offset="0.45" stop-color="#a8a8a8"/><stop offset="0.72" stop-color="#303030"/><stop offset="1" stop-color="#0e0e0e"/></linearGradient><clipPath id="c22"><rect width="24" height="24" rx="4"/></clipPath><filter id="f22" x="-10%" y="-10%" width="120%" height="120%"><feGaussianBlur stdDeviation="0.8"/></filter></defs><g clip-path="url(#c22)"><g filter="url(#f22)"><rect x="-2" y="-2" width="28" height="28" fill="url(#t22a)"/><path d="M0 12 C8 14 14 8 24 16" fill="none" stroke="#f0f0f0" stroke-width="1.2" opacity="0.8" stroke-linecap="round"/></g></g></svg></div><div class="th" style="left:185.0px;top:153.4px"><svg class="abs" style="left:2.5px;top:2.5px" width="24" height="24" viewBox="0 0 24 24"><defs><clipPath id="c23"><rect width="24" height="24" rx="4"/></clipPath><filter id="f23" x="-10%" y="-10%" width="120%" height="120%"><feGaussianBlur stdDeviation="0.8"/></filter></defs><g clip-path="url(#c23)"><g filter="url(#f23)"><rect x="-2" y="-2" width="28" height="28" fill="#0e0e0e"/><path d="M0 14 C8 6 14 16 24 6 V12 C14 22 8 14 0 20Z" fill="#d8d8d8" opacity="1"/><path d="M0 20 C8 12 14 20 24 12" fill="none" stroke="#6a6a6a" stroke-width="1.5" opacity="1" stroke-linecap="round"/></g></g></svg></div><div class="th" style="left:11.0px;top:188.2px"><svg class="abs" style="left:2.5px;top:2.5px" width="24" height="24" viewBox="0 0 24 24"><defs><linearGradient id="t24a" x1="0" y1="0" x2="0" y2="1"><stop offset="0" stop-color="#b040c0"/><stop offset="0.3" stop-color="#5040c0"/><stop offset="0.6" stop-color="#1a2a90"/><stop offset="1" stop-color="#0a0a40"/></linearGradient><clipPath id="c24"><rect width="24" height="24" rx="4"/></clipPath><filter id="f24" x="-10%" y="-10%" width="120%" height="120%"><feGaussianBlur stdDeviation="0.8"/></filter></defs><g clip-path="url(#c24)"><g filter="url(#f24)"><rect x="-2" y="-2" width="28" height="28" fill="url(#t24a)"/><path d="M0 12 C8 8 16 14 24 10 V14 C16 18 8 12 0 16Z" fill="#3050d0" opacity="0.8"/></g></g></svg></div><div class="th" style="left:45.8px;top:188.2px"><svg class="abs" style="left:2.5px;top:2.5px" width="24" height="24" viewBox="0 0 24 24"><defs><radialGradient id="t25a" cx="2" cy="2" r="12" gradientUnits="userSpaceOnUse"><stop offset="0" stop-color="#f0e8b0"/><stop offset="1" stop-color="#f0e8b0" stop-opacity="0"/></radialGradient><clipPath id="c25"><rect width="24" height="24" rx="4"/></clipPath><filter id="f25" x="-10%" y="-10%" width="120%" height="120%"><feGaussianBlur stdDeviation="0.8"/></filter></defs><g clip-path="url(#c25)"><g filter="url(#f25)"><rect x="-2" y="-2" width="28" height="28" fill="#3aa0b0"/><rect x="-2" y="-2" width="28" height="28" fill="url(#t25a)"/><path d="M0 6 C8 2 14 10 24 6 V10 C14 14 8 8 0 12Z" fill="#40d0c8" opacity="1"/><path d="M0 12 C8 8 14 16 24 10 V16 C14 20 8 14 0 18Z" fill="#6a40a0" opacity="1"/><path d="M0 18 C8 14 14 20 24 16 V24 H0Z" fill="#d048a8" opacity="1"/><path d="M0 20 C4 20 8 22 10 24 H0Z" fill="#203080" opacity="1"/></g></g></svg></div><div class="th" style="left:80.6px;top:188.2px"><svg class="abs" style="left:2.5px;top:2.5px" width="24" height="24" viewBox="0 0 24 24"><defs><clipPath id="c26"><rect width="24" height="24" rx="4"/></clipPath><filter id="f26" x="-10%" y="-10%" width="120%" height="120%"><feGaussianBlur stdDeviation="0.8"/></filter></defs><g clip-path="url(#c26)"><g filter="url(#f26)"><rect x="-2" y="-2" width="28" height="28" fill="#60b8f0"/><path d="M0 8 C8 4 14 12 24 6 V10 C14 16 8 8 0 14Z" fill="#f0c060" opacity="1"/><path d="M0 14 C8 10 14 18 24 12 V16 C14 22 8 14 0 20Z" fill="#f06090" opacity="1"/><path d="M0 20 C8 16 14 22 24 18 V24 H0Z" fill="#f0a040" opacity="1"/></g></g></svg></div><div class="th" style="left:115.4px;top:188.2px"><svg class="abs" style="left:2.5px;top:2.5px" width="24" height="24" viewBox="0 0 24 24"><defs><linearGradient id="t27a" x1="0" y1="0" x2="0" y2="1"><stop offset="0" stop-color="#c8e8f8"/><stop offset="0.3" stop-color="#a0d0f0"/><stop offset="1" stop-color="#a0d0f0"/></linearGradient><clipPath id="c27"><rect width="24" height="24" rx="4"/></clipPath><filter id="f27" x="-10%" y="-10%" width="120%" height="120%"><feGaussianBlur stdDeviation="0.8"/></filter></defs><g clip-path="url(#c27)"><g filter="url(#f27)"><rect x="-2" y="-2" width="28" height="28" fill="url(#t27a)"/><path d="M0 8 C8 4 16 6 24 10 V24 H0Z" fill="#f0a060" opacity="1"/><path d="M0 14 C8 10 16 12 24 18 V24 H0Z" fill="#3090d0" opacity="1"/><path d="M16 24 C20 20 22 18 24 16 V24Z" fill="#f07030" opacity="1"/></g></g></svg></div><div class="th" style="left:150.2px;top:188.2px"><svg class="abs" style="left:2.5px;top:2.5px" width="24" height="24" viewBox="0 0 24 24"><defs><clipPath id="c28"><rect width="24" height="24" rx="4"/></clipPath><filter id="f28" x="-10%" y="-10%" width="120%" height="120%"><feGaussianBlur stdDeviation="0.8"/></filter></defs><g clip-path="url(#c28)"><g filter="url(#f28)"><rect x="-2" y="-2" width="28" height="28" fill="#c0cce0"/><path d="M0 6 C8 10 14 2 24 8" fill="none" stroke="#f0f4f8" stroke-width="2.5" opacity="1" stroke-linecap="round"/><path d="M0 14 C8 18 14 10 24 16" fill="none" stroke="#8898c0" stroke-width="3" opacity="0.8" stroke-linecap="round"/><path d="M0 20 C8 24 14 16 24 22" fill="none" stroke="#e8eef8" stroke-width="1.5" opacity="1" stroke-linecap="round"/></g></g></svg></div><div class="th" style="left:185.0px;top:188.2px"><svg class="abs" style="left:2.5px;top:2.5px" width="24" height="24" viewBox="0 0 24 24"><defs><linearGradient id="t29a" x1="0" y1="0" x2="0" y2="1"><stop offset="0" stop-color="#5080e0"/><stop offset="1" stop-color="#a0e0f0"/></linearGradient><clipPath id="c29"><rect width="24" height="24" rx="4"/></clipPath><filter id="f29" x="-10%" y="-10%" width="120%" height="120%"><feGaussianBlur stdDeviation="0.8"/></filter></defs><g clip-path="url(#c29)"><g filter="url(#f29)"><rect x="-2" y="-2" width="28" height="28" fill="url(#t29a)"/><path d="M0 6 C8 2 14 12 24 8 V14 C14 18 8 8 0 12Z" fill="#7040b0" opacity="1"/><path d="M0 12 C8 8 14 18 24 14 V18 C14 22 8 14 0 18Z" fill="#30c0d0" opacity="1"/></g></g></svg></div><div class="th" style="left:11.0px;top:223.0px"><svg class="abs" style="left:2.5px;top:2.5px" width="24" height="24" viewBox="0 0 24 24"><defs><radialGradient id="t30a" cx="16" cy="4" r="14" gradientUnits="userSpaceOnUse"><stop offset="0" stop-color="#f06070"/><stop offset="1" stop-color="#f06070" stop-opacity="0"/></radialGradient><clipPath id="c30"><rect width="24" height="24" rx="4"/></clipPath><filter id="f30" x="-10%" y="-10%" width="120%" height="120%"><feGaussianBlur stdDeviation="0.8"/></filter></defs><g clip-path="url(#c30)"><g filter="url(#f30)"><rect x="-2" y="-2" width="28" height="28" fill="#101850"/><rect x="-2" y="-2" width="28" height="28" fill="url(#t30a)"/><path d="M0 10 C8 4 16 8 24 4 V10 C16 14 8 10 0 16Z" fill="#c03070" opacity="0.8"/><path d="M0 16 C8 12 16 16 24 12 V16 C16 20 8 18 0 22Z" fill="#4050c0" opacity="1"/></g></g></svg></div><div class="th" style="left:45.8px;top:223.0px"><svg class="abs" style="left:2.5px;top:2.5px" width="24" height="24" viewBox="0 0 24 24"><defs><clipPath id="c31"><rect width="24" height="24" rx="4"/></clipPath><filter id="f31" x="-10%" y="-10%" width="120%" height="120%"><feGaussianBlur stdDeviation="0.8"/></filter></defs><g clip-path="url(#c31)"><g filter="url(#f31)"><rect x="-2" y="-2" width="28" height="28" fill="#181838"/><path d="M0 8 C6 14 12 10 24 4 V10 C12 16 6 18 0 14Z" fill="#e05080" opacity="1"/><path d="M0 14 C6 18 14 14 24 10 V14 C14 20 6 22 0 20Z" fill="#5050b0" opacity="1"/><path d="M4 14 C10 16 16 10 22 8" fill="none" stroke="#f0a0c0" stroke-width="0.8" opacity="1" stroke-linecap="round"/></g></g></svg></div><div class="th" style="left:80.6px;top:223.0px"><svg class="abs" style="left:2.5px;top:2.5px" width="24" height="24" viewBox="0 0 24 24"><defs><linearGradient id="t32a" x1="0" y1="0" x2="0" y2="1"><stop offset="0" stop-color="#f0c8a0"/><stop offset="0.5" stop-color="#d89858"/><stop offset="1" stop-color="#b06a30"/></linearGradient><clipPath id="c32"><rect width="24" height="24" rx="4"/></clipPath><filter id="f32" x="-10%" y="-10%" width="120%" height="120%"><feGaussianBlur stdDeviation="0.8"/></filter></defs><g clip-path="url(#c32)"><g filter="url(#f32)"><rect x="-2" y="-2" width="28" height="28" fill="url(#t32a)"/><path d="M0 12 C8 8 14 18 24 10 V16 C14 24 8 14 0 18Z" fill="#a06030" opacity="0.6"/></g></g></svg></div><div class="th" style="left:115.4px;top:223.0px"><svg class="abs" style="left:2.5px;top:2.5px" width="24" height="24" viewBox="0 0 24 24"><defs><clipPath id="c33"><rect width="24" height="24" rx="4"/></clipPath><filter id="f33" x="-10%" y="-10%" width="120%" height="120%"><feGaussianBlur stdDeviation="0.8"/></filter></defs><g clip-path="url(#c33)"><g filter="url(#f33)"><rect x="-2" y="-2" width="28" height="28" fill="#f09070"/><path d="M0 6 C8 4 14 10 24 4 V10 C14 16 8 10 0 12Z" fill="#f06030" opacity="1"/><path d="M0 12 C8 10 14 16 24 10 V16 C14 22 8 16 0 18Z" fill="#c030c0" opacity="1"/><path d="M0 18 C8 16 14 22 24 16 V24 H0Z" fill="#2040b0" opacity="1"/></g></g></svg></div><div class="th" style="left:150.2px;top:223.0px"><svg class="abs" style="left:2.5px;top:2.5px" width="24" height="24" viewBox="0 0 24 24"><defs><clipPath id="c34"><rect width="24" height="24" rx="4"/></clipPath><filter id="f34" x="-10%" y="-10%" width="120%" height="120%"><feGaussianBlur stdDeviation="0.8"/></filter></defs><g clip-path="url(#c34)"><g filter="url(#f34)"><rect x="-2" y="-2" width="28" height="28" fill="#106030"/><path d="M0 6 C8 2 14 10 24 4 V10 C14 16 8 8 0 12Z" fill="#30c060" opacity="1"/><path d="M0 12 C8 8 16 14 24 10 V14 C16 18 8 12 0 16Z" fill="#20a050" opacity="1"/><path d="M0 18 C8 16 16 20 24 18 V24 H0Z" fill="#0a4020" opacity="1"/></g></g></svg></div><div class="th" style="left:185.0px;top:223.0px"><svg class="abs" style="left:2.5px;top:2.5px" width="24" height="24" viewBox="0 0 24 24"><defs><clipPath id="c35"><rect width="24" height="24" rx="4"/></clipPath><filter id="f35" x="-10%" y="-10%" width="120%" height="120%"><feGaussianBlur stdDeviation="0.8"/></filter></defs><g clip-path="url(#c35)"><g filter="url(#f35)"><rect x="-2" y="-2" width="28" height="28" fill="#f8c8d8"/><path d="M0 8 C8 4 14 12 24 8" fill="none" stroke="#fff" stroke-width="2" opacity="0.7" stroke-linecap="round"/><path d="M0 14 C8 10 14 20 24 14 V24 H0Z" fill="#f090b0" opacity="1"/><path d="M12 24 C16 20 20 20 24 18 V24Z" fill="#e05080" opacity="1"/></g></g></svg></div>
  <svg class="abs" style="left:11.5px;top:276.5px" width="12" height="12" viewBox="0 0 12 12" fill="none" stroke="#e6e6e6" stroke-width="1.1"><rect x="0.8" y="0.8" width="10.4" height="10.4" rx="1.5"/><circle cx="6.5" cy="4" r="1.2"/><path d="M0.8 8.2l3-2.8 3.5 3.5 1.5-1.2 2.4 2" stroke-linejoin="round"/></svg>
  <span class="abs" style="left:28.5px;top:275px;font-size:11px;line-height:14px;color:#ececec;-webkit-text-stroke:0.2px #ececec">Background blur</span>
  <div class="abs" style="left:14px;top:299.5px;width:200.5px;height:4px;border-radius:2px;background:#1d3a24;box-shadow:0 0 0 1px rgba(0,0,0,.35)"></div>
  <div class="abs" style="left:10.5px;top:295.5px;width:12.5px;height:12.5px;border-radius:50%;background:#111;border:1.3px solid #2f7a44"></div>
</div>
</body></html>
